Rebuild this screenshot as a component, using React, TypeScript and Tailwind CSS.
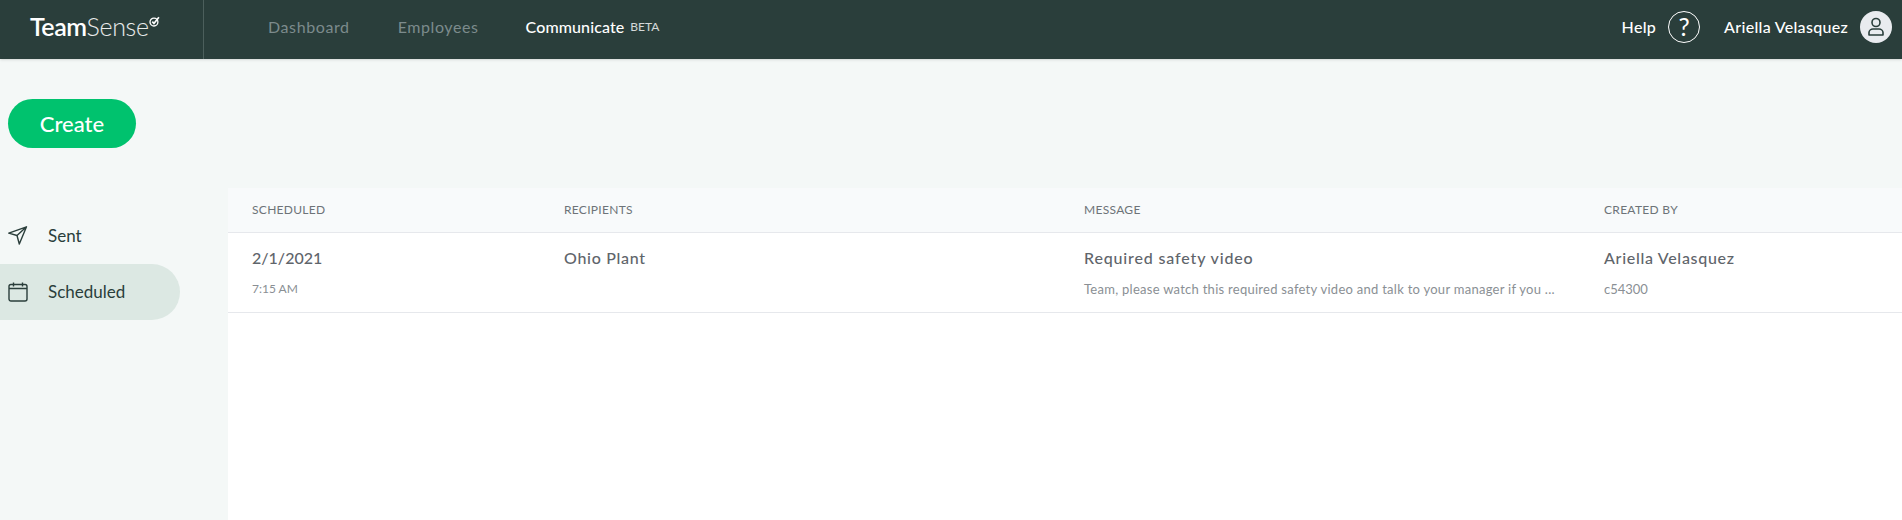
const NAV = ["Dashboard", "Employees"];

const COLUMNS = "grid grid-cols-[312px_520px_520px_1fr] pl-6";

function SendIcon() {
  return (
    <svg className="w-[20px] h-[20px] text-[#2a3e3b]" viewBox="0 0 20 20" fill="none">
      <path
        d="M18.500 0.800L0.800 7.200l8.200 2.300 2.300 8.500 7.200-17.200zM9 9.500L18.500 0.800"
        stroke="currentColor"
        strokeWidth="1.4"
        strokeLinejoin="round"
      />
    </svg>
  );
}

function CalendarIcon() {
  return (
    <svg className="w-[20px] h-[20px] text-[#2a3e3b]" viewBox="0 0 20 20" fill="none">
      <rect x="1" y="2.500" width="18" height="16.500" rx="2" stroke="currentColor" strokeWidth="1.4" />
      <path d="M1 6.500h18M5.500 0.500v4M14.500 0.500v4" stroke="currentColor" strokeWidth="1.4" />
    </svg>
  );
}

function UserIcon() {
  return (
    <svg className="w-[20px] h-[20px] text-[#2a3e3b]" viewBox="0 0 20 20" fill="none">
      <circle cx="10" cy="5.500" r="4" stroke="currentColor" strokeWidth="1.6" />
      <path
        d="M3 15.500c0-2 2-3.500 4-3.500h6c2 0 4 1.500 4 3.500V18H3v-2.500z"
        stroke="currentColor"
        strokeWidth="1.6"
        strokeLinejoin="round"
      />
    </svg>
  );
}

function Header() {
  return (
    <header className="h-[59px] bg-[#2a3e3b] flex items-center shadow-sm">
      {/* Brand */}
      <div className="w-[204px] h-full border-r border-[#4c5f5c] pl-[30px] pb-[5px] flex items-center">
        <span className="text-[25px] tracking-[-0.5px] text-white font-semibold">Team</span>
        <span className="text-[25px] tracking-[-0.3px] text-white/90 font-light">Sense</span>
        <svg className="w-[11px] h-[11px] mb-[12px] text-white" viewBox="0 0 10 10" fill="none">
          <circle cx="4.500" cy="5.500" r="3.600" stroke="currentColor" strokeWidth="1.200" />
          <path d="M3 5.200l1.500 1.600L9 1.200" stroke="currentColor" strokeWidth="1.600" />
        </svg>
      </div>

      {/* Nav */}
      <nav className="flex items-center pl-[64px] pb-[5px] text-[16px] tracking-[0.6px]">
        {NAV.map((n) => (
          <span key={n} className="text-[#7c8b8c] mr-[48px]">
            {n}
          </span>
        ))}
        <span className="text-white font-medium tracking-[0.1px] -ml-[1px]">Communicate</span>
        <span className="text-[12px] text-white/80 ml-[6px] tracking-normal">BETA</span>
      </nav>

      {/* Right side */}
      <div className="ml-auto flex items-center pr-[10px] pb-[5px] text-[16px] tracking-[0.3px] text-white font-medium">
        <span>Help</span>
        <div className="ml-[12px] w-[32px] h-[32px] rounded-full border border-white flex items-center justify-center text-[25px] font-normal tracking-normal">
          ?
        </div>
        <span className="ml-[24px]">Ariella Velasquez</span>
        <div className="ml-[12px] w-[32px] h-[32px] rounded-full bg-[#e9ebef] flex items-center justify-center">
          <UserIcon />
        </div>
      </div>
    </header>
  );
}

function Sidebar() {
  return (
    <aside className="w-[228px] shrink-0 pt-[40px]">
      <button className="ml-[8px] w-[128px] h-[49px] rounded-full bg-[#00c26e] text-white text-[22px] font-medium">
        Create
      </button>

      <div className="mt-[60px] flex flex-col text-[17px] text-[#2a3e3b]">
        <div className="h-[56px] flex items-center pl-[8px] gap-[20px]">
          <SendIcon />
          <span>Sent</span>
        </div>
        <div className="h-[56px] w-[180px] rounded-r-[28px] bg-[#dce8e3] flex items-center pl-[8px] gap-[20px]">
          <CalendarIcon />
          <span>Scheduled</span>
        </div>
      </div>
    </aside>
  );
}

function Table() {
  return (
    <section className="flex-1 mt-[129px] bg-white">
      <div className={`${COLUMNS} h-[45px] items-center bg-[#f8fafb] border-b border-[#e6e8ec] text-[12px] tracking-[0.3px] text-[#6d7378]`}>
        <span>SCHEDULED</span>
        <span>RECIPIENTS</span>
        <span>MESSAGE</span>
        <span>CREATED BY</span>
      </div>

      <div className={`${COLUMNS} h-[80px] pt-[15px] border-b border-[#e6e8ec] text-[#5f656b] text-[16px] tracking-[0.7px] font-medium leading-[20px]`}>
        <div>
          <div className="tracking-normal">2/1/2021</div>
          <div className="text-[12px] font-normal tracking-normal text-[#8a8f94] mt-[11px]">7:15 AM</div>
        </div>
        <div>Ohio Plant</div>
        <div>
          <div className="tracking-[0.85px]">Required safety video</div>
          <div className="text-[13px] font-normal tracking-[0.27px] text-[#8a8f94] mt-[11px]">
            Team, please watch this required safety video and talk to your manager if you ...
          </div>
        </div>
        <div>
          <div>Ariella Velasquez</div>
          <div className="text-[13px] font-normal tracking-normal text-[#8a8f94] mt-[11px]">c54300</div>
        </div>
      </div>
    </section>
  );
}

export default function App() {
  return (
    <div className="min-h-screen flex flex-col bg-[#f4f8f7] font-['Lato',sans-serif]">
      <Header />
      <div className="flex flex-1">
        <Sidebar />
        <Table />
      </div>
    </div>
  );
}
